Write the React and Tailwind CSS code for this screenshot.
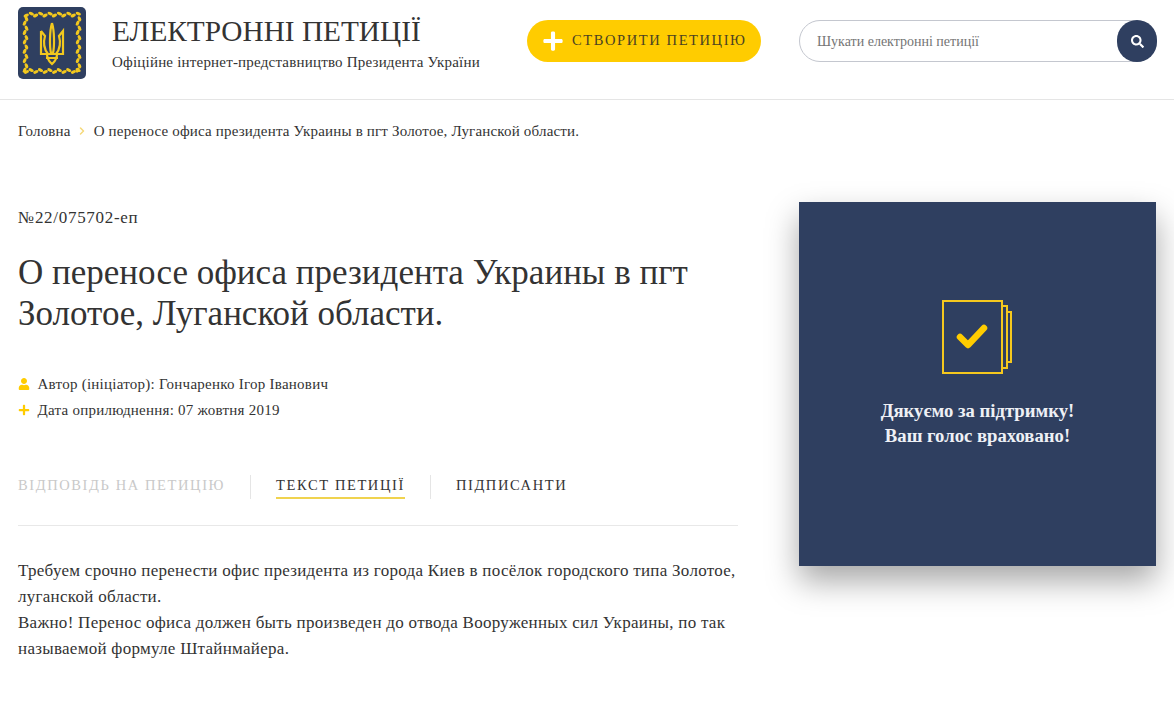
import React from 'react';
import { ChevronRight } from 'lucide-react';
import { FaPlus, FaSearch, FaUser } from 'react-icons/fa';

const serif = "font-['Liberation_Serif','DejaVu_Serif',serif]";

const Logo = () => {
    const leaves = [];
    for (let i = 0; i < 12; i++) {
        const p = 8 + i * 4.7;
        leaves.push(<ellipse key={`t${i}`} cx={p} cy={i % 2 ? 6.5 : 8.5} rx="2.8" ry="1.6" transform={`rotate(${i % 2 ? 25 : -25} ${p} 8)`} />);
        leaves.push(<ellipse key={`b${i}`} cx={p} cy={i % 2 ? 63 : 65} rx="2.8" ry="1.6" transform={`rotate(${i % 2 ? 25 : -25} ${p} 64)`} />);
        leaves.push(<ellipse key={`l${i}`} cx={i % 2 ? 6.5 : 8.5} cy={p + 4} rx="1.6" ry="2.7" transform={`rotate(${i % 2 ? 25 : -25} 8 ${p + 4})`} />);
        leaves.push(<ellipse key={`r${i}`} cx={i % 2 ? 59.5 : 61.5} cy={p + 4} rx="1.6" ry="2.7" transform={`rotate(${i % 2 ? 25 : -25} 61 ${p + 4})`} />);
    }
    return (
        <svg width="68" height="72" viewBox="0 0 68 72" className="shrink-0">
            <rect width="68" height="72" rx="5" fill="#2f3f60" />
            <g fill="#f2c81e">{leaves}</g>
            <g fill="none" stroke="#f2c81e" strokeWidth="2.2">
                <path d="M34 16 C36.5 24 36.5 40 35 46 M34 16 C31.5 24 31.5 40 33 46" />
                <path d="M23 24 V47 H45 V24 L41 29 C43 36 42 42 38 47 M23 24 L27 29 C25 36 26 42 30 47" />
                <path d="M29 47 C29 53 32 55 34 57 C36 55 39 53 39 47 M28 51 H40" />
            </g>
        </svg>
    );
};

const PetitionsIcon = () => (
    <svg width="70" height="74" viewBox="0 0 70 74" fill="none" stroke="#f5c81e" strokeWidth="2">
        <rect x="1" y="1" width="59" height="72" />
        <path d="M60 6 H65 V68 H60" />
        <path d="M65 12 H69 V62 H65" />
        <path d="M18 37 L26 45 L42 28" stroke="#ffcc00" strokeWidth="6.5" strokeLinecap="round" strokeLinejoin="round" />
    </svg>
);

const Tab = ({ children, active, muted }) => (
    <div className={`relative text-[14.5px] tracking-[1.6px] leading-5 ${muted ? 'text-[#c9c9c9]' : 'text-[#333]'}`}>
        {children}
        {active && <div className="absolute left-0 right-0 top-[22px] h-0.5 bg-[#f0d34f]" />}
    </div>
);

export default function App() {
    return (
        <div className={`${serif} min-h-[711px] bg-white text-[#333]`}>
            <header className="flex h-[100px] items-start border-b border-[#e5e5e5] pl-[18px] pt-[7px]">
                <Logo />
                <div className="ml-[26px] mt-[6px] w-[415px]">
                    <h1 className="text-[29.3px] leading-9 text-[#333]">ЕЛЕКТРОННІ ПЕТИЦІЇ</h1>
                    <p className="mt-[3px] text-[15px] leading-5 tracking-[0.2px]">Офіційне інтернет-представництво Президента України</p>
                </div>
                <div className="mt-[13px] flex h-[42px] w-[234px] items-center rounded-full bg-[#ffcc00] pl-[15px]">
                    <FaPlus className="text-[22px] text-white" />
                    <span className="ml-2 text-[14.5px] tracking-[1.6px] text-[#4a4222]">СТВОРИТИ ПЕТИЦІЮ</span>
                </div>
                <div className="ml-[38px] mt-[13px] flex h-[42px] w-[358px] items-center justify-between rounded-full border border-[#c4c7cf]">
                    <span className="ml-[17px] text-[14px] text-[#757575]">Шукати електронні петиції</span>
                    <div className="-mr-px flex h-[42px] w-10 items-center justify-center rounded-full bg-[#2f3f60]">
                        <FaSearch className="text-[13px] text-white" />
                    </div>
                </div>
            </header>

            <nav className="flex items-center pl-[18px] pt-[21px] text-[15px] leading-5 tracking-[0.18px]">
                <span>Головна</span>
                <ChevronRight className="ml-[5px] mr-[6px] h-3 w-3 text-[#f5d97a]" strokeWidth={3} />
                <span>О переносе офиса президента Украины в пгт Золотое, Луганской области.</span>
            </nav>

            <main className="flex pl-[18px] pt-[61px]">
                <div className="w-[720px]">
                    <div className="mt-[6px] text-[17px] leading-5 tracking-[0.7px]">№22/075702-еп</div>
                    <h2 className="mt-[24px] text-[35px] leading-[41px]">
                        О переносе офиса президента Украины в пгт Золотое, Луганской области.
                    </h2>
                    <div className="mt-[40px] flex items-center text-[15px] leading-5 tracking-[0.25px]">
                        <FaUser className="mr-[7.5px] h-3 w-3 text-[#ffcc00]" />
                        <span>Автор (ініціатор): Гончаренко Ігор Іванович</span>
                    </div>
                    <div className="mt-[6px] flex items-center text-[15px] leading-5 tracking-[0.25px]">
                        <FaPlus className="mr-[7.5px] h-3 w-3 text-[#ffcc00]" />
                        <span>Дата оприлюднення: 07 жовтня 2019</span>
                    </div>
                    <div className="mt-[52px] flex h-[54px] items-start border-b border-[#e8e8e8] pt-[3px]">
                        <Tab muted>ВІДПОВІДЬ НА ПЕТИЦІЮ</Tab>
                        <div className="mx-[25px] h-6 w-px bg-[#e5e5e5]" />
                        <Tab active>ТЕКСТ ПЕТИЦІЇ</Tab>
                        <div className="mx-[25px] h-6 w-px bg-[#e5e5e5]" />
                        <Tab>ПІДПИСАНТИ</Tab>
                    </div>
                    <div className="mt-[32px] text-[17px] leading-[26px] tracking-[0.28px]">
                        <p>Требуем срочно перенести офис президента из города Киев в посёлок городского типа Золотое, луганской области.</p>
                        <p>Важно! Перенос офиса должен быть произведен до отвода Вооруженных сил Украины, по так называемой формуле Штайнмайера.</p>
                    </div>
                </div>
                <aside className="ml-[61px] flex h-[364px] w-[357px] flex-col items-center bg-[#2f3f60] pt-[98px] shadow-[0_15px_30px_rgba(0,0,0,0.35)]">
                    <div className="h-[74px] w-[71px]">
                        <PetitionsIcon />
                    </div>
                    <div className="mt-[24px] text-center text-[18.7px] font-bold leading-[25px] text-[#eef0f5]">
                        <p>Дякуємо за підтримку!</p>
                        <p>Ваш голос враховано!</p>
                    </div>
                </aside>
            </main>
        </div>
    );
}
